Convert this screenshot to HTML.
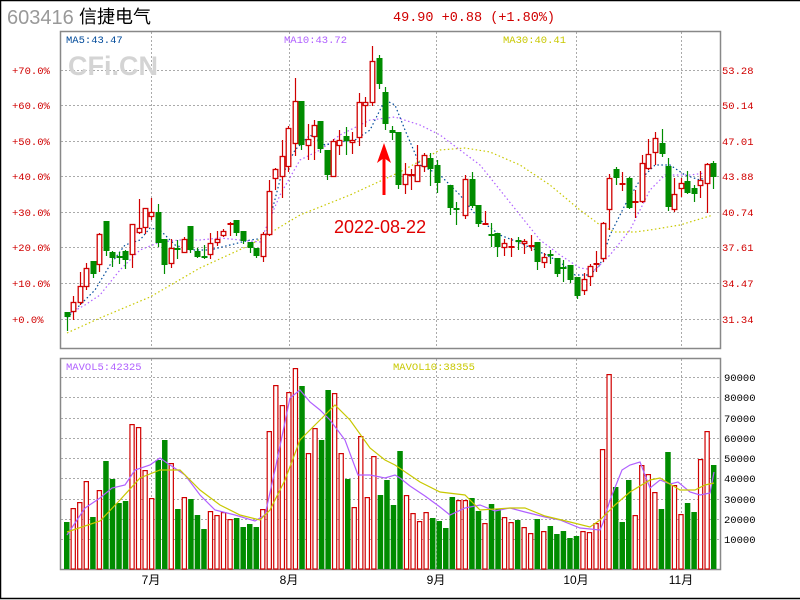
<!DOCTYPE html>
<html><head><meta charset="utf-8">
<style>
html,body{margin:0;padding:0;background:#fff;}
body{width:800px;height:600px;overflow:hidden;position:relative;}
svg{position:absolute;left:0;top:0;}
</style></head>
<body>
<svg id="s" width="800" height="600" xmlns="http://www.w3.org/2000/svg" font-family="Liberation Mono, monospace">
<rect x="0.5" y="0.5" width="820" height="598" fill="#fff" stroke="#000" stroke-width="1.5"/>
<text x="7" y="24" font-family="Liberation Sans, sans-serif" font-size="20" fill="#999">603416</text>
<text x="79" y="23" font-family="Liberation Sans, 'Noto Sans CJK SC', sans-serif" font-size="18" fill="#000">信捷电气</text>
<text x="393" y="21" font-size="13.5" fill="#d00000">49.90 +0.88 (+1.80%)</text>
<g id="grid" stroke="#aaa" stroke-dasharray="2,2" stroke-width="1"></g>
<rect x="60.5" y="31.5" width="660" height="317" fill="none" stroke="#888" stroke-width="1.5"/>
<rect x="60.5" y="358.5" width="660" height="211" fill="none" stroke="#888" stroke-width="1.5"/>
<text x="68" y="75" font-family="Liberation Sans, sans-serif" font-weight="bold" font-size="27" fill="#d4d4d4">CFi.CN</text>
<text x="66" y="43" font-size="10.5" fill="#004a9a">MA5:43.47</text>
<text x="284" y="43" font-size="10.5" fill="#b060ff">MA10:43.72</text>
<text x="503" y="43" font-size="10.5" fill="#c8c800">MA30:40.41</text>
<text x="66" y="370" font-size="10.5" fill="#b060ff">MAVOL5:42325</text>
<text x="393" y="370" font-size="10.5" fill="#c8c800">MAVOL10:38355</text>
<g font-size="10.5" fill="#d00000">
<text x="12" y="74">+70.0%</text><text x="12" y="109">+60.0%</text><text x="12" y="145">+50.0%</text><text x="12" y="180">+40.0%</text>
<text x="12" y="216">+30.0%</text><text x="12" y="251">+20.0%</text><text x="12" y="287">+10.0%</text><text x="12" y="323">+0.0%</text>
<text x="722" y="74">53.28</text><text x="722" y="109">50.14</text><text x="722" y="145">47.01</text><text x="722" y="180">43.88</text>
<text x="722" y="216">40.74</text><text x="722" y="251">37.61</text><text x="722" y="287">34.47</text><text x="722" y="323">31.34</text>
</g>
<g font-size="10.5" fill="#000">
<text x="724" y="381">90000</text><text x="724" y="401">80000</text><text x="724" y="422">70000</text><text x="724" y="442">60000</text>
<text x="724" y="462">50000</text><text x="724" y="482">40000</text><text x="724" y="503">30000</text><text x="724" y="523">20000</text><text x="724" y="543">10000</text>
</g>
<g font-family="Liberation Sans, 'Noto Sans CJK SC', sans-serif" font-size="12" fill="#000" text-anchor="middle">
<text x="151" y="584">7月</text><text x="289" y="584">8月</text><text x="436" y="584">9月</text><text x="576" y="584">10月</text><text x="681" y="584">11月</text>
</g>
<g id="lines"></g>
<g id="cand"></g>
<polygon points="384,143 377,163 384,158 391,163" fill="#f00"/>
<rect x="382.5" y="156" width="3" height="39" fill="#f00"/>
<text x="334" y="233" font-family="Liberation Sans, sans-serif" font-size="18" fill="#e00000">2022-08-22</text>
</svg>
<script>
var NS="http://www.w3.org/2000/svg";
function el(p,t,a){var e=document.createElementNS(NS,t);for(var k in a)e.setAttribute(k,a[k]);p.appendChild(e);return e;}
var g=document.getElementById('grid');
[70,105,141,176,212,247,283,319].forEach(function(y){el(g,'line',{x1:61,x2:720,y1:y+.5,y2:y+.5});});
[377,397,418,438,458,478,499,519,539].forEach(function(y){el(g,'line',{x1:61,x2:720,y1:y+.5,y2:y+.5});});
[151,289,436,576,681].forEach(function(x){el(g,'line',{x1:x+.5,x2:x+.5,y1:32,y2:348});el(g,'line',{x1:x+.5,x2:x+.5,y1:359,y2:569});});
// candles: x, open, close, high, low, red
var C=[[67,312,317,312,331,0],[73,311,302,296,320,1],[80,302,286,272,305,1],[86,286,268,263,290,1],[93,261,274,261,278,0],[99,264,234,233,272,1],[106,221,251,221,256,0],[112,252,258,251,267,0],[119,256,257,252,264,0],[125,251,260,250,269,0],[132,254,224,224,268,1],[139,232,228,199,234,1],[145,227,208,208,234,1],[151,216,212,198,220,1],[158,212,243,204,247,0],[164,239,265,239,274,0],[171,263,248,239,268,1],[177,248,250,240,259,0],[184,252,239,237,252,1],[190,226,250,226,253,0],[197,251,257,248,258,0],[204,256,258,245,259,0],[210,254,243,233,259,1],[217,242,239,231,246,1],[223,235,231,229,237,1],[230,224,223,222,236,1],[236,220,233,220,236,0],[243,231,241,231,244,0],[250,242,248,242,253,0],[256,248,256,248,258,0],[263,256,234,232,262,1],[269,234,191,180,236,1],[275,178,169,168,190,1],[282,176,156,140,198,1],[288,166,128,126,172,1],[295,143,101,78,156,1],[301,101,145,101,150,0],[308,145,139,124,160,1],[314,136,125,120,160,1],[320,121,149,121,153,0],[327,150,175,150,180,0],[333,176,141,139,176,1],[339,145,140,130,155,1],[346,136,141,127,155,0],[352,142,140,132,154,1],[359,137,102,93,146,1],[365,105,102,97,127,1],[372,102,61,46,106,1],[379,58,84,55,89,0],[385,92,124,87,130,0],[392,130,133,126,140,0],[398,132,185,132,189,0],[405,184,174,163,194,1],[411,175,174,169,190,1],[417,181,165,145,182,1],[424,166,155,153,172,1],[430,158,169,153,186,0],[437,165,183,160,193,0],[450,185,208,185,215,0],[456,208,210,202,225,0],[465,215,179,175,219,1],[472,179,206,172,208,0],[478,205,224,205,227,0],[485,224,223,211,225,1],[491,234,236,223,247,0],[497,233,247,233,257,0],[504,247,243,239,256,1],[511,247,246,238,257,1],[518,240,241,237,250,0],[524,243,241,239,254,1],[531,246,245,235,251,1],[537,242,262,242,270,0],[544,262,257,253,268,1],[550,254,255,250,264,0],[557,258,274,258,277,0],[563,267,268,260,282,0],[570,265,280,265,283,0],[577,277,296,277,299,0],[584,290,279,273,295,1],[590,276,266,264,286,1],[596,264,263,251,272,1],[603,258,223,222,262,1],[609,209,178,174,230,1],[616,169,178,167,185,0],[622,184,183,172,191,1],[629,178,208,177,209,0],[635,202,201,190,218,1],[642,201,163,155,203,1],[648,168,154,139,170,1],[655,152,138,132,165,1],[662,143,154,129,157,0],[668,166,207,158,211,0],[674,209,194,178,212,1],[681,188,183,178,197,1],[687,181,193,171,194,0],[694,188,194,185,202,0],[700,185,180,171,198,1],[707,183,164,163,213,1],[713,163,177,161,189,0]];
var V=[[522,0],[508,1],[502,1],[481,1],[517,0],[490,1],[461,0],[479,0],[503,0],[501,0],[424,1],[427,1],[470,1],[498,1],[460,0],[440,0],[463,1],[509,0],[497,1],[499,0],[515,0],[529,0],[511,1],[515,1],[512,1],[519,1],[518,0],[527,0],[524,0],[527,0],[509,1],[431,1],[385,1],[405,1],[392,1],[368,1],[386,0],[453,1],[428,1],[440,0],[390,0],[393,1],[453,1],[479,0],[507,1],[436,1],[497,1],[456,1],[495,0],[480,0],[505,0],[451,0],[495,1],[513,1],[521,1],[512,1],[518,0],[521,0],[528,0],[497,0],[500,1],[500,1],[498,0],[511,0],[523,1],[504,0],[509,0],[517,1],[522,1],[520,0],[527,1],[533,1],[519,0],[531,1],[526,0],[534,0],[531,0],[538,0],[536,0],[531,1],[532,1],[523,1],[449,1],[374,1],[487,0],[522,0],[480,0],[515,1],[465,1],[474,1],[492,1],[509,0],[452,0],[485,1],[514,1],[503,0],[512,0],[459,1],[431,1],[465,0]];
var L=document.getElementById('lines'),K=document.getElementById('cand');
function pl(pts,col,dash,w){el(L,'polyline',{points:pts,fill:'none',stroke:col,'stroke-width':w||1.2,'stroke-dasharray':dash||''});}
pl("67,333 100,318 150,297 200,268 250,245 300,215 350,195 400,172 440,150 465,148 490,152 520,165 550,185 580,210 600,225 615,232 635,232 650,230 680,225 713,215","#c8c800","1.5,2.5");
pl("67,315 85,305 100,295 120,270 140,250 160,242 180,240 200,240 220,238 240,240 260,242 280,195 300,160 320,150 340,135 370,120 395,117 420,125 440,135 460,150 480,165 500,190 520,215 540,240 560,255 580,268 595,270 610,255 630,230 650,190 665,175 690,175 713,172","#b060ff","1.5,2.5");
pl("67,318 80,305 95,290 110,265 125,245 140,240 150,228 160,230 175,245 190,250 210,250 230,245 250,240 265,238 280,180 295,150 310,135 325,145 340,142 355,140 370,130 385,100 395,105 405,130 420,165 440,175 460,195 480,220 500,235 520,243 540,252 560,262 575,275 590,275 600,265 610,235 625,205 640,180 655,165 670,165 685,175 700,180 713,172","#004a9a","1.5,2.5");
C.forEach(function(c){var x=c[0],t=Math.min(c[1],c[2]),b=Math.max(c[1],c[2]),col=c[5]?'#d00000':'#008c00';
 el(K,'line',{x1:x+.5,x2:x+.5,y1:c[3],y2:c[4],stroke:col,'stroke-width':1.2});
 if(b-t<2){el(K,'rect',{x:x-2.5,y:t,width:6,height:2,fill:col});}
 else if(c[5]){el(K,'rect',{x:x-1.8,y:t+.5,width:4.6,height:b-t,fill:'#fff',stroke:col,'stroke-width':1.3});}
 else{el(K,'rect',{x:x-2.5,y:t,width:6,height:b-t,fill:col});}});
V.forEach(function(v,i){var x=64+i*6.535,col=v[1]?'#d00000':'#008c00';
 if(v[1])el(K,'rect',{x:x+.6,y:v[0]+.6,width:4.2,height:568.4-v[0],fill:'#fff',stroke:col,'stroke-width':1.2});
 else el(K,'rect',{x:x,y:v[0],width:5.5,height:569-v[0],fill:col});});
function pl2(pts,col){el(K,'polyline',{points:pts,fill:'none',stroke:col,'stroke-width':1.2});}
pl2("67,535 85,508 100,498 112,488 125,485 135,470 150,465 160,458 170,465 185,475 200,495 215,510 235,515 255,521 265,515 275,470 290,398 300,390 310,402 320,410 330,420 345,440 358,475 370,475 385,478 395,475 400,478 410,486 425,496 440,507 450,515 465,508 480,505 495,511 510,508 525,512 545,517 560,520 580,528 600,530 603,523 610,500 622,470 630,465 640,462 650,488 660,480 670,484 678,482 690,492 700,495 710,493 714,472","#b060ff");
pl2("67,532 100,521 120,500 140,478 160,470 180,470 200,490 220,505 240,515 260,520 270,510 285,480 300,440 320,420 335,405 350,420 370,448 385,460 395,465 420,482 440,492 465,495 480,510 510,508 525,508 545,516 570,522 590,527 600,520 615,505 630,492 650,480 660,478 670,484 680,490 695,490 705,485 714,483","#c8c800");
</script>
</body></html>
